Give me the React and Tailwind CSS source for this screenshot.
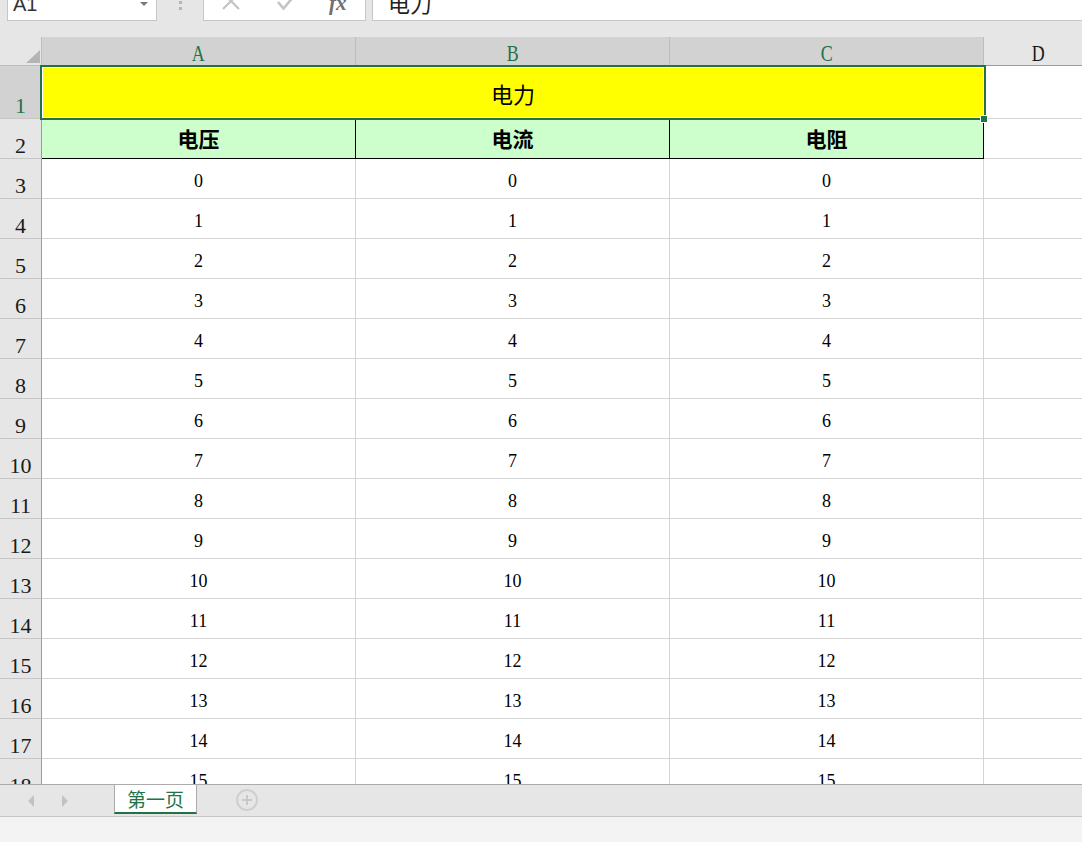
import React from 'react';

const rows = Array.from({ length: 16 }, (_, i) => i);

function RowHead({ n, selected, h }) {
  return (
    <div
      className={`${h} w-[42px] shrink-0 flex items-end justify-center pb-[1px] border-r border-b border-r-[#9b9b9b] border-b-[#c6c6c6] text-[22px] leading-none font-['Liberation_Serif',serif] ${
        selected ? 'bg-[#d2d2d2] text-[#217346]' : 'bg-[#e6e6e6] text-[#1a1a1a]'
      }`}
    >
      {n}
    </div>
  );
}

export default function App() {
  return (
    <div className="h-[842px] w-full flex flex-col overflow-hidden bg-[#e6e6e6] select-none">
      {/* Formula bar */}
      <div className="h-[37px] shrink-0 flex items-start bg-[#e6e6e6]">
        <div className="ml-[7px] w-[150px] h-[21px] bg-white border-x border-b border-[#c6c6c6] flex items-start justify-between overflow-hidden">
          <span className="ml-[5px] -mt-[6px] text-[20px] leading-none text-[#333] font-['Liberation_Sans',sans-serif]">A1</span>
          <svg width="8" height="5" viewBox="0 0 8 5" className="mr-[8px] mt-[2px]">
            <path d="M0 0 L8 0 L4 4 Z" fill="#7a7a7a" />
          </svg>
        </div>
        <div className="w-[46px] flex flex-col items-center gap-[3px] pt-[1px]">
          <span className="w-[3px] h-[3px] bg-[#b5b5b5]" />
          <span className="w-[3px] h-[3px] bg-[#b5b5b5]" />
        </div>
        <div className="w-[163px] h-[21px] bg-white border-x border-b border-[#c6c6c6] relative overflow-hidden">
          <svg width="18" height="18" viewBox="0 0 18 18" className="absolute left-[18px] -top-[8px]">
            <path d="M1 1 L17 17 M17 1 L1 17" stroke="#c4c4c4" strokeWidth="2.2" fill="none" />
          </svg>
          <svg width="18" height="16" viewBox="0 0 18 16" className="absolute left-[73px] -top-[5px]">
            <path d="M1 7 L6.5 13.5 L17 1" stroke="#c4c4c4" strokeWidth="2.6" fill="none" />
          </svg>
          <span className="absolute left-[125px] -top-[7px] text-[21px] leading-none italic font-bold text-[#6f6f6f] font-['Liberation_Serif',serif]">
            fx
          </span>
        </div>
        <div className="ml-[6px] flex-1 h-[21px] bg-white border-l border-b border-[#c6c6c6] overflow-hidden">
          <span className="block ml-[15px] -mt-[9px] text-[22px] leading-none text-[#222] font-['Noto_Sans_CJK_SC',sans-serif]">
            电力
          </span>
        </div>
      </div>

      {/* Grid */}
      <div className="relative h-[747px] shrink-0 overflow-hidden bg-white">
        {/* Column headers */}
        <div className="flex h-[29px]">
          <div className="relative w-[42px] shrink-0 bg-[#e6e6e6] border-b border-r border-[#bdbdbd]">
            <svg width="14" height="13" viewBox="0 0 14 13" className="absolute right-[1px] bottom-[2px]">
              <path d="M14 0 L14 13 L0 13 Z" fill="#b4b4b4" />
            </svg>
          </div>
          {['A', 'B', 'C'].map((c) => (
            <div
              key={c}
              className="w-[314px] shrink-0 bg-[#d2d2d2] border-r border-b border-r-[#bdbdbd] border-b-[#9b9b9b] flex items-center justify-center pt-[4px] text-[23px] leading-none text-[#217346] font-['Liberation_Serif',serif]"
            >
              <span className="inline-block scale-x-[0.78]">{c}</span>
            </div>
          ))}
          <div className="w-[108px] shrink-0 bg-[#e6e6e6] border-b border-[#9b9b9b] flex items-center justify-center pt-[4px] text-[23px] leading-none text-[#1a1a1a] font-['Liberation_Serif',serif]">
            <span className="inline-block scale-x-[0.78]">D</span>
          </div>
        </div>

        {/* Row 1 */}
        <div className="flex h-[53px]">
          <RowHead n={1} selected h="h-[53px]" />
          <div className="w-[942px] shrink-0 bg-[#ffff00] flex items-center justify-center pt-[2px] text-[22px] text-black font-['Noto_Sans_CJK_SC',sans-serif]">
            电力
          </div>
          <div className="w-[108px] shrink-0 border-b border-[#d4d4d4]" />
        </div>

        {/* Row 2 */}
        <div className="flex h-[40px]">
          <RowHead n={2} h="h-[40px]" />
          {['电压', '电流', '电阻'].map((t) => (
            <div
              key={t}
              className="w-[314px] shrink-0 bg-[#ccffcc] border-r border-b border-black flex items-center justify-center text-[21px] font-bold text-black font-['Noto_Sans_CJK_SC',sans-serif]"
            >
              {t}
            </div>
          ))}
          <div className="w-[108px] shrink-0 border-b border-[#d4d4d4]" />
        </div>

        {/* Data rows */}
        {rows.map((v) => (
          <div key={v} className="flex h-[40px]">
            <RowHead n={v + 3} h="h-[40px]" />
            {[0, 1, 2].map((c) => (
              <div
                key={c}
                className="w-[314px] shrink-0 border-r border-b border-[#d4d4d4] flex items-center justify-center pt-[5px] text-[18px] leading-none text-black font-['Liberation_Serif',serif]"
              >
                {v}
              </div>
            ))}
            <div className="w-[108px] shrink-0 border-b border-[#d4d4d4]" />
          </div>
        ))}

        {/* Selection */}
        <div className="absolute left-[40px] top-[28px] w-[946px] h-[55px] border-2 border-[#217346] shadow-[inset_0_0_0_1px_#fff] pointer-events-none" />
        <div className="absolute left-[980px] top-[78px] w-[8px] h-[8px] bg-[#217346] border border-white" />
      </div>

      {/* Sheet tabs */}
      <div className="h-[33px] shrink-0 flex items-start bg-[#e6e6e6] border-t border-b border-t-[#ababab] border-b-[#c6c6c6]">
        <div className="w-[114px] h-full flex items-center">
          <svg width="6" height="12" viewBox="0 0 6 12" className="ml-[28px]">
            <path d="M6 0 L0 6 L6 12 Z" fill="#c2c2c2" />
          </svg>
          <svg width="6" height="12" viewBox="0 0 6 12" className="ml-[28px]">
            <path d="M0 0 L6 6 L0 12 Z" fill="#c2c2c2" />
          </svg>
        </div>
        <div className="w-[83px] h-[29px] bg-white border-x border-b-2 border-x-[#ababab] border-b-[#217346] flex items-center justify-center text-[19px] leading-none text-[#217346] font-['Noto_Sans_CJK_SC',sans-serif]">
          第一页
        </div>
        <div className="ml-[39px] mt-[4px] w-[22px] h-[22px] rounded-full border-2 border-[#cfcfcf] flex items-center justify-center">
          <svg width="12" height="12" viewBox="0 0 12 12">
            <path d="M6 1 L6 11 M1 6 L11 6" stroke="#c8c8c8" strokeWidth="2" />
          </svg>
        </div>
      </div>

      {/* Status bar */}
      <div className="h-[25px] shrink-0 bg-[#f3f3f3]" />
    </div>
  );
}
